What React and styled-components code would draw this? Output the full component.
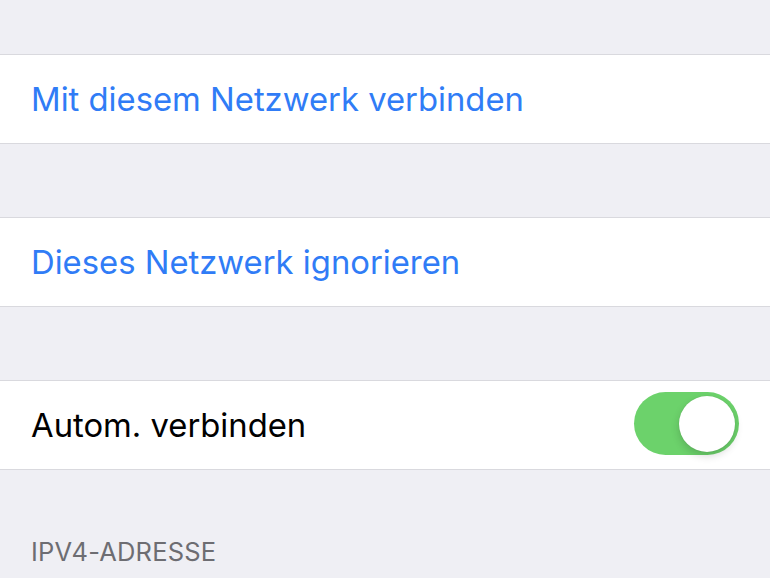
import React, { useState } from "react";
import styled, { createGlobalStyle } from "styled-components";

const Global = createGlobalStyle`
  html, body { margin: 0; padding: 0; background: #efeff4; }
  body { font-family: Inter, "Noto Sans", sans-serif; -webkit-font-smoothing: antialiased; }
`;

const Page = styled.div`
  width: 770px;
  height: 578px;
  overflow: hidden;
  background: #efeff4;
  padding-top: 54px;
  box-sizing: border-box;
  display: flex;
  flex-direction: column;
`;

const Group = styled.div`
  background: #fff;
  border-top: 1px solid #d9d9de;
  border-bottom: 1px solid #d9d9de;
  margin-bottom: ${(p) => p.$gap}px;
`;

const Cell = styled.div`
  height: 88px;
  display: flex;
  align-items: center;
  justify-content: space-between;
  padding: 0 31px 0 31px;
`;

const Label = styled.span`
  font-size: 32.8px;
  color: ${(p) => (p.$action ? "#307cf6" : "#000")};
`;

const Track = styled.button`
  width: 105px;
  height: 63px;
  margin-bottom: 3px;
  border-radius: 32px;
  border: none;
  padding: 0;
  background: ${(p) => (p.$on ? "#6cd26b" : "#e5e5ea")};
  position: relative;
  cursor: pointer;
`;

const Knob = styled.span`
  position: absolute;
  top: 3.5px;
  left: ${(p) => (p.$on ? "45px" : "3px")};
  width: 56px;
  height: 56px;
  border-radius: 50%;
  background: #fff;
  box-shadow: 0 4px 8px rgba(0, 0, 0, 0.16), 0 0 1px rgba(0, 0, 0, 0.15);
`;

const SectionHeader = styled.div`
  padding: 0 31px;
  margin-top: 66px;
  font-size: 25.5px;
  color: #6d6d72;
  letter-spacing: 0.2px;
`;

export default function App() {
  const [on, setOn] = useState(true);
  return (
    <Page>
      <Global />
      <Group $gap={73}>
        <Cell>
          <Label $action>Mit diesem Netzwerk verbinden</Label>
        </Cell>
      </Group>
      <Group $gap={73}>
        <Cell>
          <Label $action>Dieses Netzwerk ignorieren</Label>
        </Cell>
      </Group>
      <Group $gap={0}>
        <Cell>
          <Label>Autom. verbinden</Label>
          <Track $on={on} onClick={() => setOn(!on)}>
            <Knob $on={on} />
          </Track>
        </Cell>
      </Group>
      <SectionHeader>IPV4-ADRESSE</SectionHeader>
    </Page>
  );
}
